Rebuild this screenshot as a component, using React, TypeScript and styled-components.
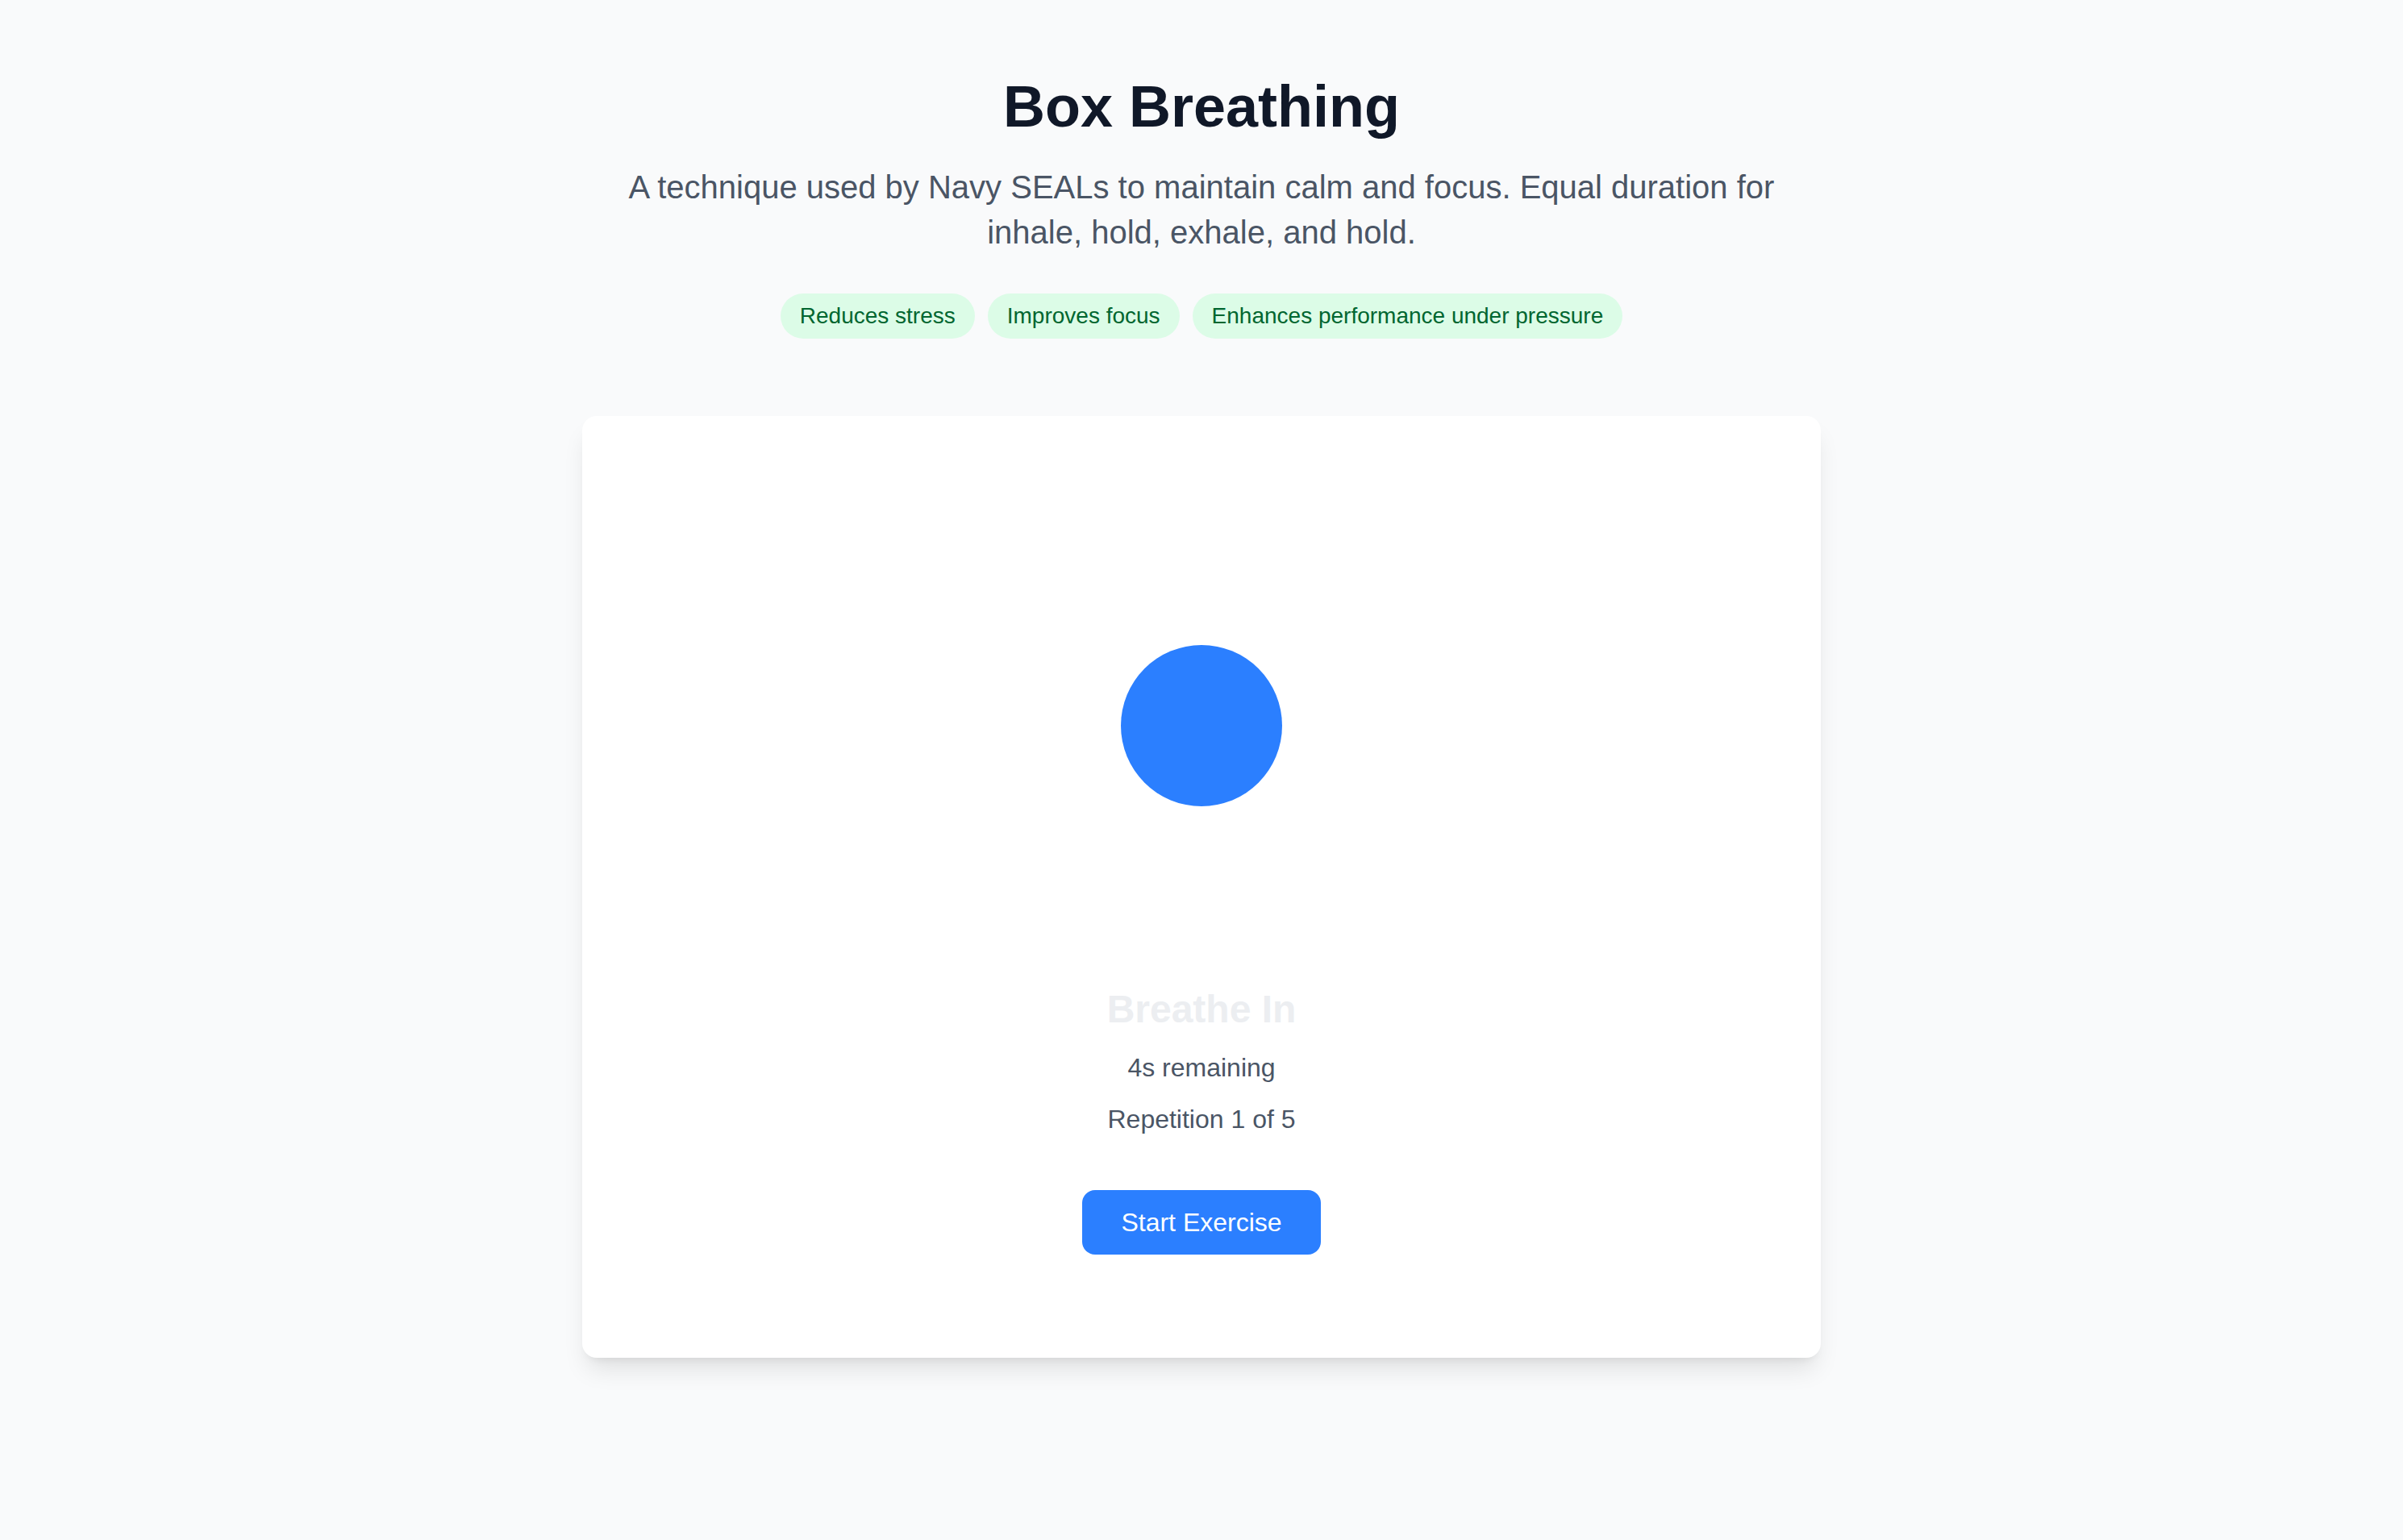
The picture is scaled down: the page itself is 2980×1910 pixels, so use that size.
import * as React from "react";
import styled, { createGlobalStyle } from "styled-components";

// The reference is a 2x render, so every size here is doubled from CSS px.
const benefits = ["Reduces stress", "Improves focus", "Enhances performance under pressure"];

const GlobalStyle = createGlobalStyle`
  html, body {
    margin: 0;
    padding: 0;
    background: #f9fafb;
    font-family: "Liberation Sans", Arial, Helvetica, sans-serif;
  }
  #root {
    min-height: 100vh;
  }
`;

const Page = styled.main`
  max-width: 1536px;
  margin: 0 auto;
  padding: 92px 0 96px;
  text-align: center;
`;

const Title = styled.h1`
  margin: 0 0 32px;
  font-size: 72px;
  line-height: 80px;
  font-weight: 700;
  color: #101828;
`;

const Description = styled.p`
  margin: 0 0 48px;
  font-size: 40px;
  line-height: 56px;
  color: #4a5565;
`;

const Tags = styled.ul`
  list-style: none;
  margin: 0 0 96px;
  padding: 0;
  display: flex;
  flex-wrap: wrap;
  justify-content: center;
  gap: 16px;
`;

const Tag = styled.li`
  padding: 8px 24px;
  border-radius: 9999px;
  background: #dcfce7;
  color: #016630;
  font-size: 28px;
  line-height: 40px;
`;

const Card = styled.section`
  background: #ffffff;
  border-radius: 18px;
  box-shadow: 0 20px 30px -6px rgba(0, 0, 0, 0.1), 0 8px 12px -8px rgba(0, 0, 0, 0.1);
  padding: 64px 64px 128px;
  display: flex;
  flex-direction: column;
  align-items: center;
`;

const Stage = styled.div`
  height: 640px;
  width: 100%;
  display: flex;
  align-items: center;
  justify-content: center;
`;

const Bubble = styled.div<{ size: number }>`
  width: ${({ size }) => size}px;
  height: ${({ size }) => size}px;
  border-radius: 50%;
  background: #2b7fff;
`;

const Phase = styled.h2`
  margin: 0;
  font-size: 48px;
  line-height: 64px;
  font-weight: 700;
  color: #eceef1;
`;

const Info = styled.p`
  margin: 16px 0 0;
  font-size: 32px;
  line-height: 48px;
  color: #4a5565;
`;

const StartButton = styled.button`
  margin-top: 64px;
  padding: 16px 48px;
  border: none;
  border-radius: 16px;
  background: #2b7fff;
  color: #ffffff;
  font-family: inherit;
  font-size: 32px;
  line-height: 48px;
  cursor: pointer;
`;

export default function App() {
  return (
    <>
      <GlobalStyle />
      <Page>
        <Title>Box Breathing</Title>
        <Description>
          A technique used by Navy SEALs to maintain calm and focus. Equal duration for inhale,
          hold, exhale, and hold.
        </Description>
        <Tags>
          {benefits.map((b) => (
            <Tag key={b}>{b}</Tag>
          ))}
        </Tags>
        <Card>
          <Stage>
            <Bubble size={200} />
          </Stage>
          <Phase>Breathe In</Phase>
          <Info>4s remaining</Info>
          <Info>Repetition 1 of 5</Info>
          <StartButton>Start Exercise</StartButton>
        </Card>
      </Page>
    </>
  );
}
